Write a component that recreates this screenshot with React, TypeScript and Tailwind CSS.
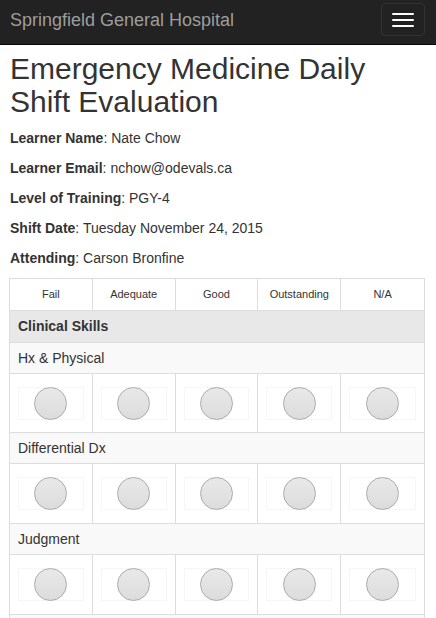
const levels = ['Fail', 'Adequate', 'Good', 'Outstanding', 'N/A'];

const items = [
    { label: 'Hx & Physical', h: 'h-[59px]' },
    { label: 'Differential Dx', h: 'h-[60px]' },
    { label: 'Judgment', h: 'h-[60px]' }
];

const info = [
    { label: 'Learner Name', value: 'Nate Chow' },
    { label: 'Learner Email', value: 'nchow@odevals.ca' },
    { label: 'Level of Training', value: 'PGY-4' },
    { label: 'Shift Date', value: 'Tuesday November 24, 2015' },
    { label: 'Attending', value: 'Carson Bronfine' }
];

function Radio() {
    return (
        <div className="w-full h-[33px] border border-[#f6f6f6] flex justify-center">
            <div className="w-[33px] h-[33px] -mt-px rounded-full border border-[#ababab] bg-gradient-to-b from-[#e9e9e9] to-[#dcdcdc]" />
        </div>
    );
}

export default function App() {
    return (
        <div className="min-h-screen bg-white text-[#333] font-[family-name:Liberation_Sans,Arial,sans-serif]">
            <nav className="h-[45px] bg-[#222] border-b border-[#080808] flex justify-between items-start">
                <span className="pl-[10px] pt-[10px] text-[18px] leading-[20px] text-[#9d9d9d]">
                    Springfield General Hospital
                </span>
                <button className="mt-[3px] mr-[11px] w-[44px] h-[33px] rounded border border-[#333] flex flex-col items-center justify-center gap-[4px]">
                    <span className="block w-[22px] h-[2px] bg-white rounded-[1px]" />
                    <span className="block w-[22px] h-[2px] bg-white rounded-[1px]" />
                    <span className="block w-[22px] h-[2px] bg-white rounded-[1px]" />
                </button>
            </nav>

            <div className="pl-[9px] pr-[11px]">
                <h1 className="mt-[7px] mb-[10px] text-[30px] leading-[33px] pl-px">
                    Emergency Medicine Daily Shift Evaluation
                </h1>

                {info.map((row) => (
                    <p key={row.label} className="text-[14px] leading-[20px] mb-[10px] pl-px">
                        <b>{row.label}</b>: {row.value}
                    </p>
                ))}

                <div className="border border-[#ddd] border-b-0">
                    <div className="grid grid-cols-5 h-[32px] border-b border-[#ddd]">
                        {levels.map((l, i) => (
                            <div
                                key={l}
                                className={`flex items-center justify-center text-[11px] ${i < 4 ? 'border-r border-[#ddd]' : ''}`}
                            >
                                {l}
                            </div>
                        ))}
                    </div>
                    <div className="h-[32px] border-b border-[#ddd] bg-[#e8e8e8] flex items-center pl-[8px] text-[14px] font-bold">
                        Clinical Skills
                    </div>
                    {items.map((item) => (
                        <div key={item.label}>
                            <div className="h-[31px] border-b border-[#ddd] bg-[#f9f9f9] flex items-center pl-[8px] text-[14px]">
                                {item.label}
                            </div>
                            <div className={`grid grid-cols-5 border-b border-[#ddd] ${item.h}`}>
                                {levels.map((l, i) => (
                                    <div
                                        key={l}
                                        className={`flex items-center px-[8px] ${i < 4 ? 'border-r border-[#ddd]' : ''}`}
                                    >
                                        <Radio />
                                    </div>
                                ))}
                            </div>
                        </div>
                    ))}
                    <div className="h-[31px] bg-[#f9f9f9]" />
                </div>
            </div>
        </div>
    );
}
